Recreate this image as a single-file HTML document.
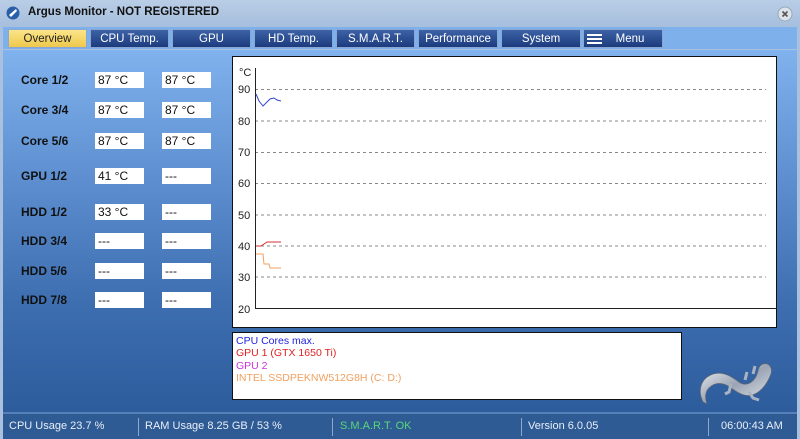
<!DOCTYPE html>
<html><head><style>
*{margin:0;padding:0;box-sizing:border-box}
body{width:800px;height:439px;overflow:hidden;font-family:"Liberation Sans",Tahoma,sans-serif;position:relative;background:#a9c1de}
.title{position:absolute;left:0;top:0;width:800px;height:27px;background:linear-gradient(#b9cde6,#a6bfdd);}
.title span{position:absolute;left:28px;top:6px;font-size:11.5px;font-weight:bold;color:#111}
.tabbar{position:absolute;left:3px;top:27px;width:794px;height:22px;background:#7eb1ec}
.tab{position:absolute;top:29px;height:19px;background:linear-gradient(#3d62a6,#1c3b7e);color:#fff;font-size:11.5px;text-align:center;line-height:19px;border:1px solid #8aa7d2}
.tab.act{background:linear-gradient(#fbe58a,#efc84c);color:#222}
.main{position:absolute;left:3px;top:50px;width:794px;height:362px;background:linear-gradient(#80b2ee 0%,#5e8fd0 35%,#3d6eb0 70%,#2d5c9c 100%)}
.lbl{position:absolute;left:21px;font-size:12px;font-weight:bold;color:#111}
.box{position:absolute;width:49px;height:16px;background:#fff;font-size:12px;padding-left:3px;line-height:16px;color:#111}
.status{position:absolute;left:3px;top:412px;width:794px;height:27px;background:#2f5b95;border-top:2px solid #5580b8;color:#e8eef8;font-size:11px}
.status span{position:absolute;top:6px}
.sep{position:absolute;top:4px;width:1px;height:18px;background:#8ea8cc}
</style></head><body>
<div class="title"><svg style="position:absolute;left:6px;top:6px" width="14" height="14"><circle cx="7" cy="7" r="6.5" fill="#2a5fa8"/><path d="M3 9 L10 3 L11 5 L5 11Z" fill="#fff"/></svg><span>Argus Monitor - NOT REGISTERED</span>
<svg style="position:absolute;left:777px;top:6px" width="16" height="16"><circle cx="8" cy="8" r="7" fill="#dde3ea" stroke="#9aa8b8"/><path d="M5.5 5.5L10.5 10.5M10.5 5.5L5.5 10.5" stroke="#555" stroke-width="1.6"/></svg></div>
<div class="tabbar"></div>
<div class="tab act" style="left:8px;width:79px">Overview</div>
<div class="tab" style="left:90px;width:79px">CPU Temp.</div>
<div class="tab" style="left:172px;width:79px">GPU</div>
<div class="tab" style="left:254px;width:79px">HD Temp.</div>
<div class="tab" style="left:336px;width:79px">S.M.A.R.T.</div>
<div class="tab" style="left:418px;width:80px">Performance</div>
<div class="tab" style="left:501px;width:80px">System</div>
<div class="tab" style="left:583px;width:80px"><span style="position:absolute;left:3px;top:4px;width:15px;height:10px;border-top:2px solid #fff;border-bottom:2px solid #fff"><span style="position:absolute;left:0;top:2px;width:15px;height:2px;background:#fff"></span></span><span style="padding-left:14px">Menu</span></div>
<div class="main"></div>
<div class="lbl" style="top:73px">Core 1/2</div><div class="box" style="left:95px;top:72px">87 °C</div><div class="box" style="left:162px;top:72px">87 °C</div>
<div class="lbl" style="top:103px">Core 3/4</div><div class="box" style="left:95px;top:102px">87 °C</div><div class="box" style="left:162px;top:102px">87 °C</div>
<div class="lbl" style="top:134px">Core 5/6</div><div class="box" style="left:95px;top:133px">87 °C</div><div class="box" style="left:162px;top:133px">87 °C</div>
<div class="lbl" style="top:169px">GPU 1/2</div><div class="box" style="left:95px;top:168px">41 °C</div><div class="box" style="left:162px;top:168px">---</div>
<div class="lbl" style="top:205px">HDD 1/2</div><div class="box" style="left:95px;top:204px">33 °C</div><div class="box" style="left:162px;top:204px">---</div>
<div class="lbl" style="top:234px">HDD 3/4</div><div class="box" style="left:95px;top:233px">---</div><div class="box" style="left:162px;top:233px">---</div>
<div class="lbl" style="top:264px">HDD 5/6</div><div class="box" style="left:95px;top:263px">---</div><div class="box" style="left:162px;top:263px">---</div>
<div class="lbl" style="top:293px">HDD 7/8</div><div class="box" style="left:95px;top:292px">---</div><div class="box" style="left:162px;top:292px">---</div>
<svg style="position:absolute;left:232px;top:56px" width="545" height="272" font-family="Liberation Sans,sans-serif" font-size="11" fill="#222">
<rect x="0.5" y="0.5" width="544" height="271" fill="#fff" stroke="#111"/>
<text x="7" y="20">°C</text>
<g stroke="#888" stroke-dasharray="3,3">
<line x1="23" y1="33.5" x2="534" y2="33.5"/><line x1="23" y1="65" x2="534" y2="65"/><line x1="23" y1="96.5" x2="534" y2="96.5"/><line x1="23" y1="127.5" x2="534" y2="127.5"/><line x1="23" y1="159" x2="534" y2="159"/><line x1="23" y1="190" x2="534" y2="190"/><line x1="23" y1="221" x2="534" y2="221"/>
</g>
<line x1="23.5" y1="12" x2="23.5" y2="253" stroke="#222"/><line x1="23" y1="252.5" x2="545" y2="252.5" stroke="#222"/>
<text x="6" y="37">90</text><text x="6" y="69">80</text><text x="6" y="100">70</text><text x="6" y="131">60</text><text x="6" y="163">50</text><text x="6" y="194">40</text><text x="6" y="225">30</text><text x="6" y="257">20</text>
<polyline points="24,38 27,45 31,50 35,46 38,43 42,42 45,44 49,45" fill="none" stroke="#3344cc"/>
<polyline points="24,190 29,190 32,188 35,186 49,186" fill="none" stroke="#d03030"/>
<polyline points="24,198 31,198 32,208 37,208 38,212 49,212" fill="none" stroke="#f0a060"/>
</svg>
<div style="position:absolute;left:232px;top:332px;width:450px;height:68px;background:#fff;border:1px solid #111;font-size:10.5px;line-height:12.3px;padding:2px 3px">
<div style="color:#2222dd">CPU Cores max.</div><div style="color:#dd2222">GPU 1 (GTX 1650 Ti)</div><div style="color:#cc33dd">GPU 2</div><div style="color:#f0a060">INTEL SSDPEKNW512G8H (C: D:)</div></div>
<svg style="position:absolute;left:695px;top:352px" width="85" height="60" viewBox="0 0 85 60">
<defs><linearGradient id="s" x1="0" y1="0" x2="1" y2="1"><stop offset="0" stop-color="#f4f6fa"/><stop offset=".5" stop-color="#9aa4b4"/><stop offset="1" stop-color="#e6eaf0"/></linearGradient></defs>
<path d="M8 50 C2 38 6 26 18 22 C28 19 36 24 44 30 C50 34 56 32 60 26 C64 20 62 14 68 12 C74 10 78 16 76 22 C73 30 68 38 60 42 C52 46 44 42 36 36 C28 30 20 30 14 36 C10 40 10 46 12 52Z" fill="url(#s)" stroke="#5a6474" stroke-width=".8"/>
<path d="M36 32 L34 40 L30 42 M54 40 L58 46 L64 48 M58 22 L60 14 M50 28 L52 20" stroke="#aab3c2" stroke-width="3" fill="none"/>
</svg>
<div class="status"><span style="left:6px">CPU Usage 23.7 %</span><div class="sep" style="left:135px"></div>
<span style="left:142px">RAM Usage 8.25 GB / 53 %</span><div class="sep" style="left:329px"></div>
<span style="left:337px;color:#58d878">S.M.A.R.T. OK</span><div class="sep" style="left:518px"></div>
<span style="left:525px">Version 6.0.05</span><div class="sep" style="left:705px"></div>
<span style="left:718px">06:00:43 AM</span></div>
</body></html>
